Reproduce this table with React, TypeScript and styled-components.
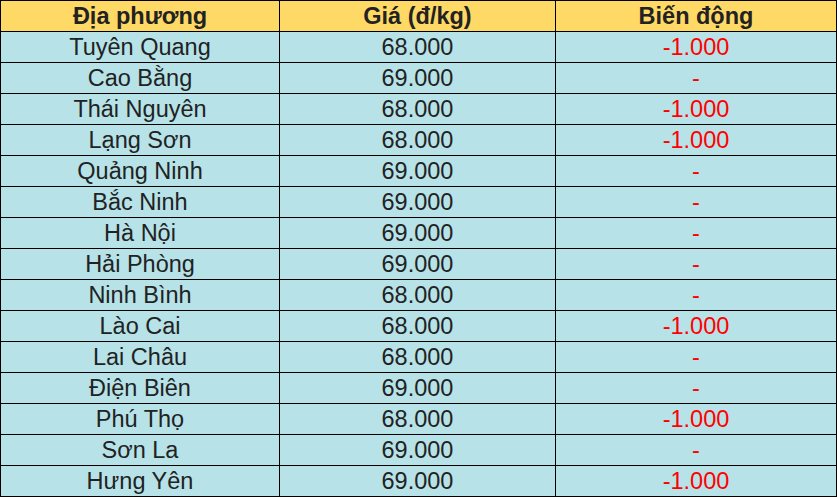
import styled, { createGlobalStyle } from "styled-components";

const GlobalStyle = createGlobalStyle`
  html, body {
    margin: 0;
    padding: 0;
    background: #ffffff;
  }
`;

interface Row {
  place: string;
  price: string;
  change: string;
}

const rows: Row[] = [
  { place: "Tuyên Quang", price: "68.000", change: "-1.000" },
  { place: "Cao Bằng", price: "69.000", change: "-" },
  { place: "Thái Nguyên", price: "68.000", change: "-1.000" },
  { place: "Lạng Sơn", price: "68.000", change: "-1.000" },
  { place: "Quảng Ninh", price: "69.000", change: "-" },
  { place: "Bắc Ninh", price: "69.000", change: "-" },
  { place: "Hà Nội", price: "69.000", change: "-" },
  { place: "Hải Phòng", price: "69.000", change: "-" },
  { place: "Ninh Bình", price: "68.000", change: "-" },
  { place: "Lào Cai", price: "68.000", change: "-1.000" },
  { place: "Lai Châu", price: "68.000", change: "-" },
  { place: "Điện Biên", price: "69.000", change: "-" },
  { place: "Phú Thọ", price: "68.000", change: "-1.000" },
  { place: "Sơn La", price: "69.000", change: "-" },
  { place: "Hưng Yên", price: "69.000", change: "-1.000" },
];

const Table = styled.table`
  border-collapse: collapse;
  table-layout: fixed;
  width: 836px;
  font-family: "Liberation Sans", Arial, sans-serif;
`;

const HeadCell = styled.th`
  height: 30px;
  padding: 0;
  border: 1px solid #000;
  background: #ffd966;
  color: #222222;
  font-size: 23.5px;
  line-height: 30px;
  font-weight: bold;
  text-align: center;
  vertical-align: middle;
  overflow: hidden;
`;

const Cell = styled.td<{ $red?: boolean }>`
  height: 30px;
  padding: 0;
  border: 1px solid #000;
  background: #b6e2e8;
  color: ${(p) => (p.$red ? "#ff0000" : "#222222")};
  font-size: 23.5px;
  line-height: 30px;
  text-align: center;
  vertical-align: middle;
  overflow: hidden;
`;

export default function App() {
  return (
    <>
      <GlobalStyle />
      <Table>
        <colgroup>
          <col style={{ width: 279 }} />
          <col style={{ width: 276 }} />
          <col style={{ width: 281 }} />
        </colgroup>
        <thead>
          <tr>
            <HeadCell>Địa phương</HeadCell>
            <HeadCell>Giá (đ/kg)</HeadCell>
            <HeadCell>Biến động</HeadCell>
          </tr>
        </thead>
        <tbody>
          {rows.map((r) => (
            <tr key={r.place}>
              <Cell>{r.place}</Cell>
              <Cell>{r.price}</Cell>
              <Cell $red>{r.change}</Cell>
            </tr>
          ))}
        </tbody>
      </Table>
    </>
  );
}
